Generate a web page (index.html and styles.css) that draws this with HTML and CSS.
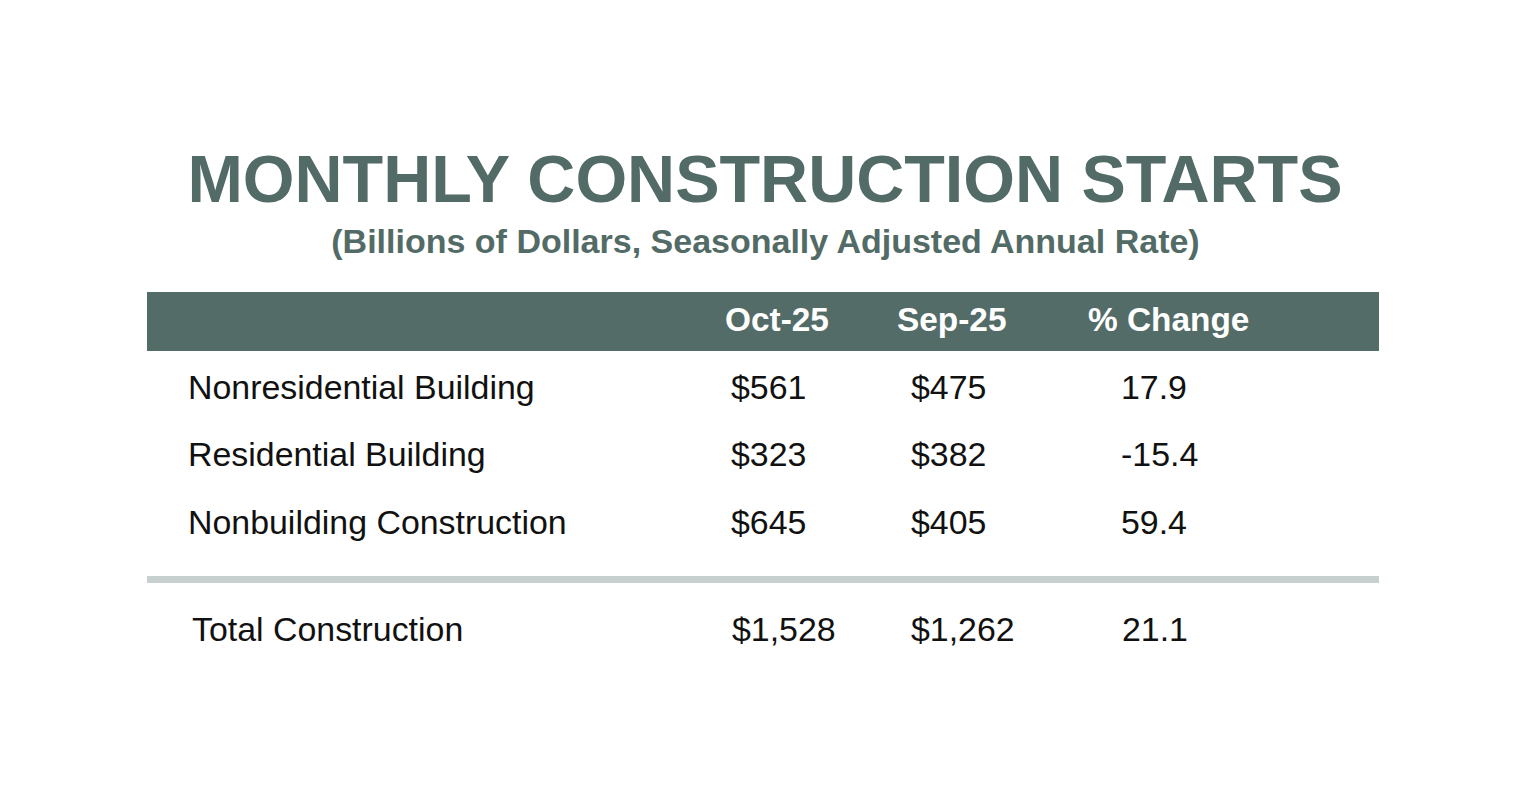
FILE: index.html
```html
<!DOCTYPE html>
<html lang="en">
<head>
<meta charset="utf-8">
<title>Monthly Construction Starts</title>
<link rel="stylesheet" href="styles.css">
</head>
<body>
<main class="slide">
  <h1 class="title">MONTHLY CONSTRUCTION STARTS</h1>
  <p class="subtitle">(Billions of Dollars, Seasonally Adjusted Annual Rate)</p>
  <div class="table">
    <div class="head">
      <span></span>
      <span class="h h2">Oct-25</span>
      <span class="h h3">Sep-25</span>
      <span class="h h4">% Change</span>
    </div>
    <div class="row">
      <span class="label">Nonresidential Building</span>
      <span class="c2">$561</span>
      <span class="c3">$475</span>
      <span class="c4">17.9</span>
    </div>
    <div class="row">
      <span class="label">Residential Building</span>
      <span class="c2">$323</span>
      <span class="c3">$382</span>
      <span class="c4">-15.4</span>
    </div>
    <div class="row">
      <span class="label">Nonbuilding Construction</span>
      <span class="c2">$645</span>
      <span class="c3">$405</span>
      <span class="c4">59.4</span>
    </div>
    <div class="rule"></div>
    <div class="row total">
      <span class="label">Total Construction</span>
      <span class="c2">$1,528</span>
      <span class="c3">$1,262</span>
      <span class="c4">21.1</span>
    </div>
  </div>
</main>
</body>
</html>
```

FILE: styles.css
```css
* { box-sizing: border-box; }

html, body {
  margin: 0;
  padding: 0;
  background: #ffffff;
}

body {
  font-family: "Liberation Sans", Arial, Helvetica, sans-serif;
  color: #111111;
}

.slide {
  width: 1232px;
  margin-left: 147px;
  padding-top: 146px;
}

.title {
  margin: 0;
  font-size: 66.5px;
  line-height: 66px;
  font-weight: 700;
  color: #536b66;
  text-align: center;
  white-space: nowrap;
  padding-left: 4px;
}

.subtitle {
  margin: 12px 0 0;
  padding-left: 5px;
  font-size: 34px;
  line-height: 34px;
  font-weight: 700;
  color: #536b66;
  text-align: center;
  white-space: nowrap;
}

.table {
  margin-top: 34px;
}

.head,
.row {
  display: grid;
  grid-template-columns: 578px 172px 191px 1fr;
  font-size: 33.9px;
  line-height: 34px;
  white-space: nowrap;
}

.head {
  height: 59px;
  padding-top: 11px;
  background: #546c67;
  color: #ffffff;
  font-weight: 700;
  font-size: 33.4px;
}

.row {
  height: 67.5px;
  padding-top: 18.5px;
}

.label { padding-left: 41px; }
.c2 { padding-left: 6px; }
.c3 { padding-left: 14px; }
.c4 { padding-left: 33px; }

.rule {
  height: 7px;
  margin-top: 22.5px;
  background: #c7d0cf;
}

.row.total {
  padding-top: 29px;
}

.total .label { padding-left: 45px; }
.total .c2 { padding-left: 7px; }
.total .c4 { padding-left: 34px; }
```
